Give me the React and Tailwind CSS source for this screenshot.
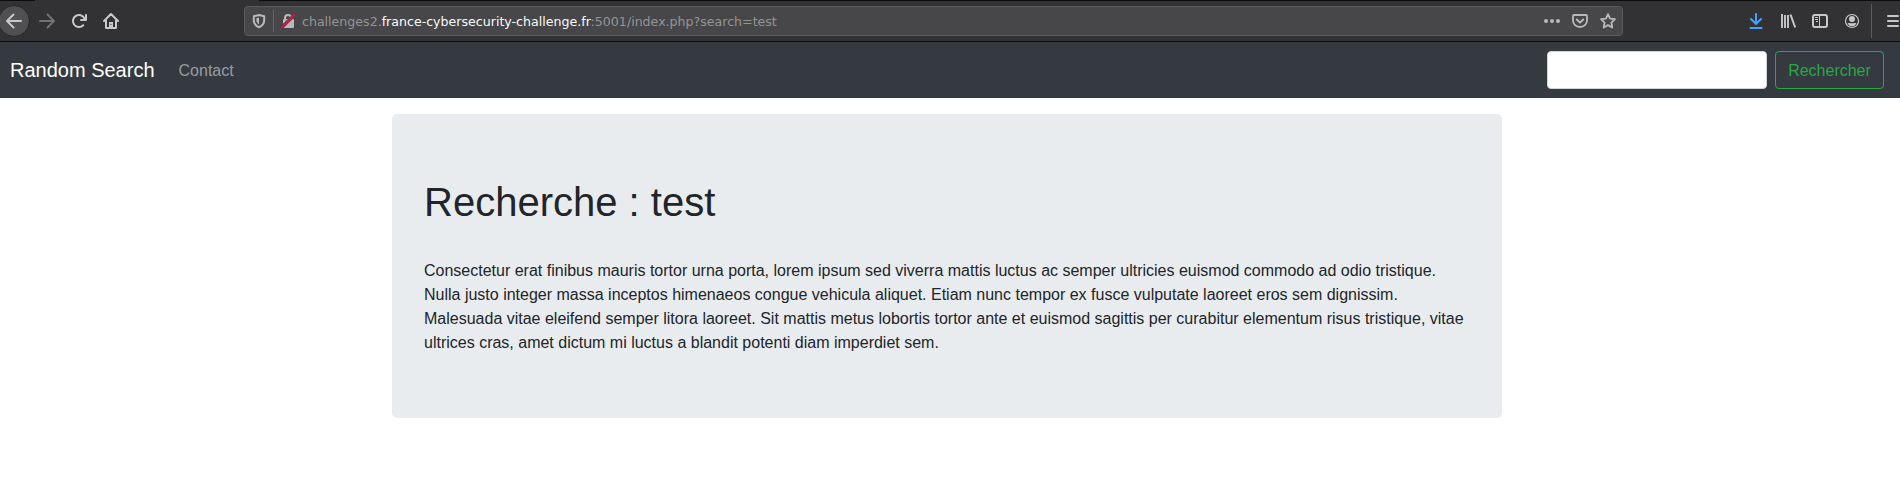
const ICON = "shrink-0 overflow-visible";

function BackIcon() {
  return (
    <svg className={ICON} width="16" height="16" viewBox="0 0 16 16" fill="none" stroke="#c8c8c9" strokeWidth="2" strokeLinecap="round" strokeLinejoin="round">
      <path d="M15 8H1.500M7.500 1.500 1 8l6.500 6.500" />
    </svg>
  );
}

function ForwardIcon() {
  return (
    <svg className={ICON} width="16" height="16" viewBox="0 0 16 16" fill="none" stroke="#727273" strokeWidth="2" strokeLinecap="round" strokeLinejoin="round">
      <path d="M1 8h13.500M8.500 1.500 15 8l-6.500 6.500" />
    </svg>
  );
}

function ReloadIcon() {
  return (
    <svg className={ICON} width="16" height="16" viewBox="0 0 16 16">
      <path fill="#c8c8c9" d="M15 1a1 1 0 0 0-1 1v2.418A6.995 6.995 0 1 0 8 15a6.954 6.954 0 0 0 4.950-2.050 1 1 0 0 0-1.414-1.414A5.019 5.019 0 1 1 12.549 6H10a1 1 0 0 0 0 2h5a1 1 0 0 0 1-1V2a1 1 0 0 0-1-1z" />
    </svg>
  );
}

function HomeIcon() {
  return (
    <svg className={ICON} width="16" height="16" viewBox="0 0 16 16" fill="none" stroke="#c8c8c9" strokeWidth="2" strokeLinecap="round" strokeLinejoin="round">
      <path d="M1 8l7-7 7 7M3 7.500V15h10V7.500" />
      <path d="M6 15V9h4v6z" fill="#c8c8c9" stroke="none" />
      <path d="M7.500 11h1v1h-1z" fill="#323234" stroke="none" />
    </svg>
  );
}

function ShieldIcon() {
  return (
    <svg className={ICON} width="14" height="16" viewBox="0 0 14 16">
      <path d="M7 2 L12.200 3.300 V7 C12.200 10.500 10 13 7 14.200 C4 13 1.800 10.500 1.800 7 V3.300Z" fill="none" stroke="#b9b9ba" strokeWidth="2" strokeLinejoin="round" />
      <path d="M7 4.600V11.500C5.200 10.400 4.400 9 4.400 7V5.200Z" fill="#b9b9ba" />
    </svg>
  );
}

function InsecureIcon() {
  return (
    <svg className={ICON} width="14" height="16" viewBox="0 0 14 16">
      <path d="M4 8V5a3 3 0 0 1 6 0v3" fill="none" stroke="#b9b9ba" strokeWidth="2" />
      <rect x="2" y="6" width="11" height="9" rx="1" fill="#b9b9ba" />
      <path d="M1 14.200 13.400 1.900" stroke="#474749" strokeWidth="3.400" />
      <path d="M1 14.200 13.400 1.900" stroke="#f5044b" strokeWidth="2" strokeLinecap="round" />
    </svg>
  );
}

function DotsIcon() {
  return (
    <svg className={ICON} width="16" height="16" viewBox="0 0 16 16" fill="#b9b9ba">
      <circle cx="2" cy="8" r="2" />
      <circle cx="8" cy="8" r="2" />
      <circle cx="14" cy="8" r="2" />
    </svg>
  );
}

function PocketIcon() {
  return (
    <svg className={ICON} width="16" height="16" viewBox="0 0 16 16" fill="none" stroke="#b9b9ba" strokeWidth="2" strokeLinecap="round" strokeLinejoin="round">
      <path d="M2 2h12a1 1 0 0 1 1 1v4.500a7 6.500 0 0 1-14 0V3a1 1 0 0 1 1-1z" strokeWidth="1.800" />
      <path d="M4.800 6.500 8 9.600l3.200-3.100" />
    </svg>
  );
}

function StarIcon() {
  return (
    <svg className={ICON} width="16" height="16" viewBox="0 0 16 16" fill="none" stroke="#b9b9ba" strokeWidth="1.800" strokeLinejoin="round">
      <path d="M8 1.100l2.100 4.500 4.900.6-3.600 3.400.9 4.900L8 12.100l-4.300 2.400.9-4.900L1 6.200l4.900-.6z" />
    </svg>
  );
}

function DownloadIcon() {
  return (
    <svg className={ICON} width="14" height="16" viewBox="0 0 14 16" fill="none" stroke="#45a1ff" strokeWidth="2" strokeLinecap="round" strokeLinejoin="round">
      <path d="M7 1v9.500M2 6l5 5 5-5M1.500 15h11" />
    </svg>
  );
}

function LibraryIcon() {
  return (
    <svg className={ICON} width="16" height="16" viewBox="0 0 16 16" fill="none" stroke="#c8c8c9" strokeWidth="2">
      <path d="M2 1v14M5 2v13M8 2v13" strokeWidth="1.900" />
      <path d="M10.500 1.500l4.700 13" />
    </svg>
  );
}

function SidebarIcon() {
  return (
    <svg className={ICON} width="16" height="16" viewBox="0 0 16 16" fill="none" stroke="#c8c8c9">
      <rect x="1" y="2" width="14" height="12" rx="2" strokeWidth="2" />
      <path d="M7.500 2v12M3 4.500h3M3 6.500h3M4 8.500h2" strokeWidth="1" />
    </svg>
  );
}

function AccountIcon() {
  return (
    <svg className={ICON} width="16" height="16" viewBox="0 0 16 16">
      <circle cx="8" cy="8" r="6.500" fill="none" stroke="#c8c8c9" strokeWidth="1.200" />
      <circle cx="8" cy="6" r="3" fill="#c8c8c9" />
      <path d="M3.500 10.500C5 9.500 6 10.300 8 10.300s3-.8 4.500.2A5.200 5.200 0 0 1 8 13.200a5.200 5.200 0 0 1-4.500-2.700z" fill="#c8c8c9" />
    </svg>
  );
}

function MenuIcon() {
  return (
    <svg className={ICON} width="13" height="16" viewBox="0 0 13 16" stroke="#c8c8c9" strokeWidth="2" strokeLinecap="round">
      <path d="M1 3h10M1 8h10M1 13h10" />
    </svg>
  );
}

function BrowserToolbar() {
  return (
    <div className="flex h-[42px] flex-col border-b border-[#0c0c0d] bg-[#323234]">
      <div className="flex h-px justify-between">
        <div className="w-[35px] bg-[#0c0c0d]" />
        <div className="w-[1641px] bg-[#0c0c0d]" />
      </div>
      <div className="flex h-10 items-center">
        <div className="-ml-[2px] flex size-8 shrink-0 items-center justify-center rounded-full border border-[#252526] bg-[#505052]">
          <BackIcon />
        </div>
        <div className="ml-[9px] flex shrink-0 gap-4">
          <ForwardIcon />
          <ReloadIcon />
          <HomeIcon />
        </div>
        <div className="ml-[125px] flex h-[30px] w-[1379px] shrink-0 items-center rounded border border-[#5c5c5e] bg-[#474749] pl-[7px] pr-[6px]">
          <ShieldIcon />
          <div className="ml-[7px] h-[22px] w-px bg-[#656567]" />
          <div className="ml-[7px] flex">
            <InsecureIcon />
          </div>
          <div className="ml-[7px] grow pt-px font-['DejaVu_Sans'] text-[12.600px] leading-[18px] text-[#949496]">
            challenges2.<span className="text-[#f9f9fa]">france-cybersecurity-challenge.fr</span>:5001/index.php?search=test
          </div>
          <div className="flex gap-3">
            <DotsIcon />
            <PocketIcon />
            <StarIcon />
          </div>
        </div>
        <div className="ml-[126px] flex shrink-0">
          <DownloadIcon />
        </div>
        <div className="ml-[17px] flex shrink-0 items-center gap-4">
          <LibraryIcon />
          <SidebarIcon />
          <AccountIcon />
        </div>
        <div className="ml-[11px] h-[34px] w-px shrink-0 bg-[#5c5c5e]" />
        <div className="ml-[15px] flex shrink-0">
          <MenuIcon />
        </div>
      </div>
    </div>
  );
}

function Navbar() {
  return (
    <nav className="flex h-14 items-center bg-[#343a40] pl-[10px] pr-4">
      <a className="text-xl leading-[30px] text-white">Random Search</a>
      <a className="ml-6 pt-0.5 text-base text-[#999c9f]">Contact</a>
      <form className="ml-auto flex gap-2">
        <input className="h-[38px] w-[220px] rounded border border-[#ced4da] bg-white px-3" aria-label="Recherche" />
        <button type="button" className="h-[38px] w-[109px] rounded border border-[#28a745] pt-0.5 text-base text-[#28a745]">
          Rechercher
        </button>
      </form>
    </nav>
  );
}

export default function App() {
  return (
    <div className="h-[494px] w-[1900px] overflow-hidden bg-white font-['Liberation_Sans',sans-serif] text-[#212529]">
      <BrowserToolbar />
      <Navbar />
      <main className="ml-[392px] mt-4 h-[304px] w-[1110px] rounded-[4.800px] bg-[#e9ecef] px-8 py-16">
        <h1 className="text-[40px] leading-[48px]">Recherche : test</h1>
        <p className="mt-[33px] text-base leading-6">
          Consectetur erat finibus mauris tortor urna porta, lorem ipsum sed viverra mattis luctus ac semper ultricies euismod commodo ad odio tristique. Nulla justo integer massa inceptos himenaeos congue vehicula aliquet. Etiam nunc tempor ex fusce vulputate laoreet eros sem dignissim. Malesuada vitae eleifend semper litora laoreet. Sit mattis metus lobortis tortor ante et euismod sagittis per curabitur elementum risus tristique, vitae ultrices cras, amet dictum mi luctus a blandit potenti diam imperdiet sem.
        </p>
      </main>
    </div>
  );
}
